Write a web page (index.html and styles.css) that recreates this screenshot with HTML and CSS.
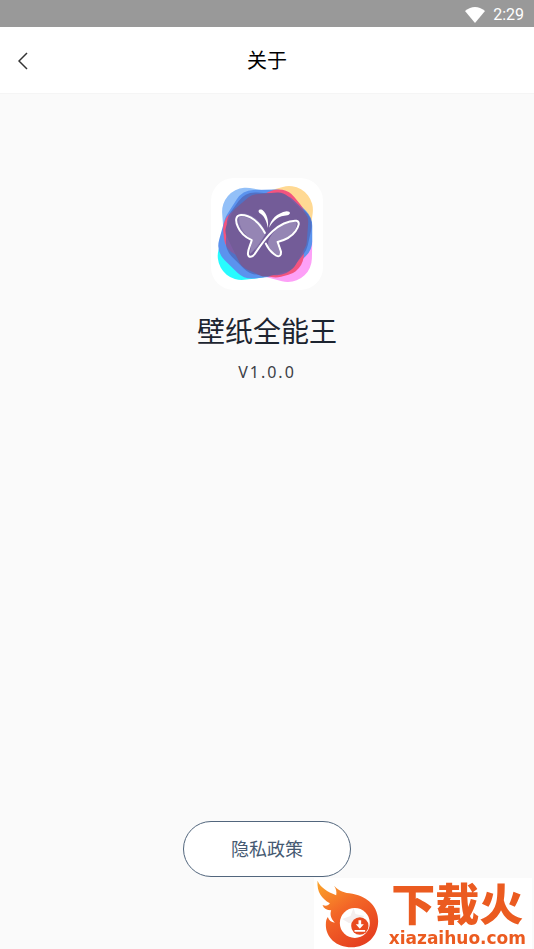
FILE: index.html
```html
<!DOCTYPE html>
<html lang="zh-CN">
<head>
<meta charset="UTF-8">
<meta name="viewport" content="width=device-width, initial-scale=1">
<title>关于</title>
<link rel="stylesheet" href="styles.css">
</head>
<body>
<div class="status-bar">
  <svg class="wifi" viewBox="0 0 20 16" aria-hidden="true"><path d="M0 4Q10-4 20 4L10 16Z"/></svg>
  <span>2:29</span>
</div>

<header class="header">
  <button class="back" type="button" aria-label="返回">
    <svg viewBox="0 0 10 18" aria-hidden="true"><path d="M9 1L1 9L9 17"/></svg>
  </button>
  <h1>关于</h1>
</header>

<main class="about">
  <svg class="app-icon" viewBox="-12 -12 333 333" aria-hidden="true">
    <rect x="-12" y="-12" width="333" height="333" rx="68" fill="#fff"/>
    <!-- petals -->
    <g class="petals">
      <path fill="#93c0f8" stroke="#93c0f8" d="M92 88L135 95L95 130Z"/>
      <path fill="#ffd993" stroke="#ffd993" d="M220 83L175 95L215 120Z"/>
      <path fill="#28fbff" stroke="#28fbff" d="M79 220L90 180L125 215Z"/>
      <path fill="#fda0f7" stroke="#fda0f7" d="M217 226L175 215L218 180Z"/>
    </g>
    <!-- overlaps between the petals -->
    <g class="overlaps">
      <path fill="#5b93ee" stroke="#5b93ee" d="M116 86L182 84L227 130L227 175L185 217L110 225L72 188L88 130Z"/>
      <path fill="#f3547f" stroke="#f3547f" d="M188 84L205 105L180 222L202 216L88 160L86 140Z"/>
      <path fill="#4d63b5" stroke="#4d63b5" opacity=".7" d="M120 93L190 98L225 131L215 175L184 215L130 214L94 178L97 125Z"/>
    </g>
    <path class="core" d="M125 75L188 70L238 118L234 175L205 228L150 242L108 223L70 145L85 109Z"/>
    <!-- butterfly -->
    <path fill="#8171a7" d="M152 152C137 110 102 92 76 93C59 98 66 128 81 149L115 170L120 205Z"/>
    <path fill="#9585b4" d="M150 154C130 119 98 102 73 102C67 126 87 158 110 173L103 215Q125 196 150 154Z"/>
    <path fill="#9585b4" d="M158 176C172 139 210 115 242 118C248 144 220 169 183 178L195 213Q181 228 158 190Z"/>
    <path class="wings" d="M148 151C132 119 103 97 77 98C60 99 60 116 68 133C75 150 91 164 109 173C106 187 96 203 98 215C100 226 111 224 118 214C137 185 153 162 171 146C190 129 219 113 242 115C254 118 248 133 240 145C226 165 206 173 186 178L196 207C197 223 186 224 175 214C163 205 156 194 151 183"/>
    <path fill="#fff" d="M157 137C154 115 145 99 132 92C126 85 132 79 141 83C154 94 160 113 157 137ZM161 136C164 112 184 92 213 87C226 87 225 97 215 99C190 101 174 112 161 136Z"/>
  </svg>
  <h2>壁纸全能王</h2>
  <p class="version">V1.0.0</p>
  <button class="privacy" type="button">隐私政策</button>
</main>

<div class="watermark">
  <svg class="flame" viewBox="0 0 188 204" aria-hidden="true">
    <defs>
      <linearGradient id="fire" x1="0" y1="0" x2=".6" y2="1">
        <stop offset="0" stop-color="#fba62b"/>
        <stop offset=".5" stop-color="#f36627"/>
        <stop offset="1" stop-color="#e64120"/>
      </linearGradient>
    </defs>
    <path fill="url(#fire)" d="M4 2C15 25 32 33 60 46C62 35 60 27 54 17C69 34 84 38 109 41C158 51 186 82 186 123C186 169 152 202 106 202C59 202 29 171 29 135C29 123 31 116 35 111C38 121 45 127 56 128C46 118 40 106 45 91C32 91 23 86 19 75C29 79 37 77 41 70C16 54 2 38 4 2Z"/>
    <circle cx="116" cy="129" r="45" fill="#fff"/>
    <path fill="#f4eeee" d="M103 108L112 84L118 102L144 108L135 123L98 129L78 117Z"/>
    <circle cx="131" cy="138" r="26" fill="#e94a20"/>
    <path fill="#fff" d="M127 121H135V133H143L131 146L119 133H127ZM115 150H147V155H115Z"/>
  </svg>
  <div class="brand">
    <strong>下载火</strong>
    <span>xiazaihuo.com</span>
  </div>
</div>
</body>
</html>
```

FILE: styles.css
```css
* {
  box-sizing: border-box;
}
body {
  margin: 0;
  min-height: 100vh;
  display: flex;
  flex-direction: column;
  background: #fafafa;
  font-family: "Noto Sans", "Noto Sans CJK SC", sans-serif;
}
h1, h2, p {
  margin: 0;
  font-weight: 400;
}
.status-bar {
  height: 27px;
  padding: 2px 10px 0;
  display: flex;
  align-items: center;
  justify-content: flex-end;
  gap: 8px;
  background: #999;
  color: #fff;
  font-family: Roboto, sans-serif;
  font-size: 16px;
  line-height: 20px;
}
.wifi {
  width: 20px;
  height: 16px;
  fill: #fff;
}
.header {
  height: 67px;
  padding-top: 2px;
  display: grid;
  grid-template-columns: 48px 1fr 48px;
  align-items: center;
  background: #fff;
  border-bottom: 1px solid #f5f5f5;
}
.header h1 {
  color: #000;
  font-size: 20px;
  line-height: 30px;
  text-align: center;
}
.back {
  height: 48px;
  padding: 0 0 0 18px;
  display: flex;
  align-items: center;
  border: none;
  background: none;
}
.back svg {
  width: 10px;
  height: 18px;
  fill: none;
  stroke: #333;
  stroke-width: 1.5;
}
.about {
  flex: 1;
  padding: 84px 20px 72px;
  display: flex;
  flex-direction: column;
  align-items: center;
}
.app-icon {
  width: 112px;
  height: 112px;
}
.petals path,
.overlaps path,
.core {
  stroke-linejoin: round;
}
.petals path {
  stroke-width: 142;
}
.overlaps path {
  stroke-width: 124;
}
.core {
  fill: #735c98;
  stroke: #735c98;
  stroke-width: 78;
}
.wings {
  fill: none;
  stroke: #fff;
  stroke-width: 6;
  stroke-linecap: round;
  stroke-linejoin: round;
}
.about h2 {
  margin-top: 21px;
  color: #1c2430;
  font-size: 28px;
  line-height: 40px;
}
.version {
  margin-top: 9px;
  color: #3c4046;
  font-size: 16px;
  line-height: 24px;
  letter-spacing: 2px;
}
.privacy {
  width: 168px;
  height: 56px;
  margin-top: auto;
  padding: 0 0 2px;
  border: 1px solid #52667d;
  border-radius: 28px;
  background: #fff;
  color: #465a72;
  font-family: inherit;
  font-size: 18px;
}
.watermark {
  position: fixed;
  right: 2px;
  bottom: 0;
  height: 71px;
  padding: 0 6px 0 2px;
  display: flex;
  align-items: center;
  gap: 10px;
  background: #fff;
  color: #eb5b20;
}
.flame {
  width: 63px;
  height: 68px;
}
.brand {
  display: flex;
  flex-direction: column;
  align-items: center;
}
.brand strong {
  font-family: "Noto Sans CJK SC", sans-serif;
  font-size: 44px;
  font-weight: 900;
  line-height: 48px;
}
.brand span {
  font-family: "DejaVu Sans", sans-serif;
  font-size: 17px;
  font-weight: 700;
  line-height: 24px;
}
```
